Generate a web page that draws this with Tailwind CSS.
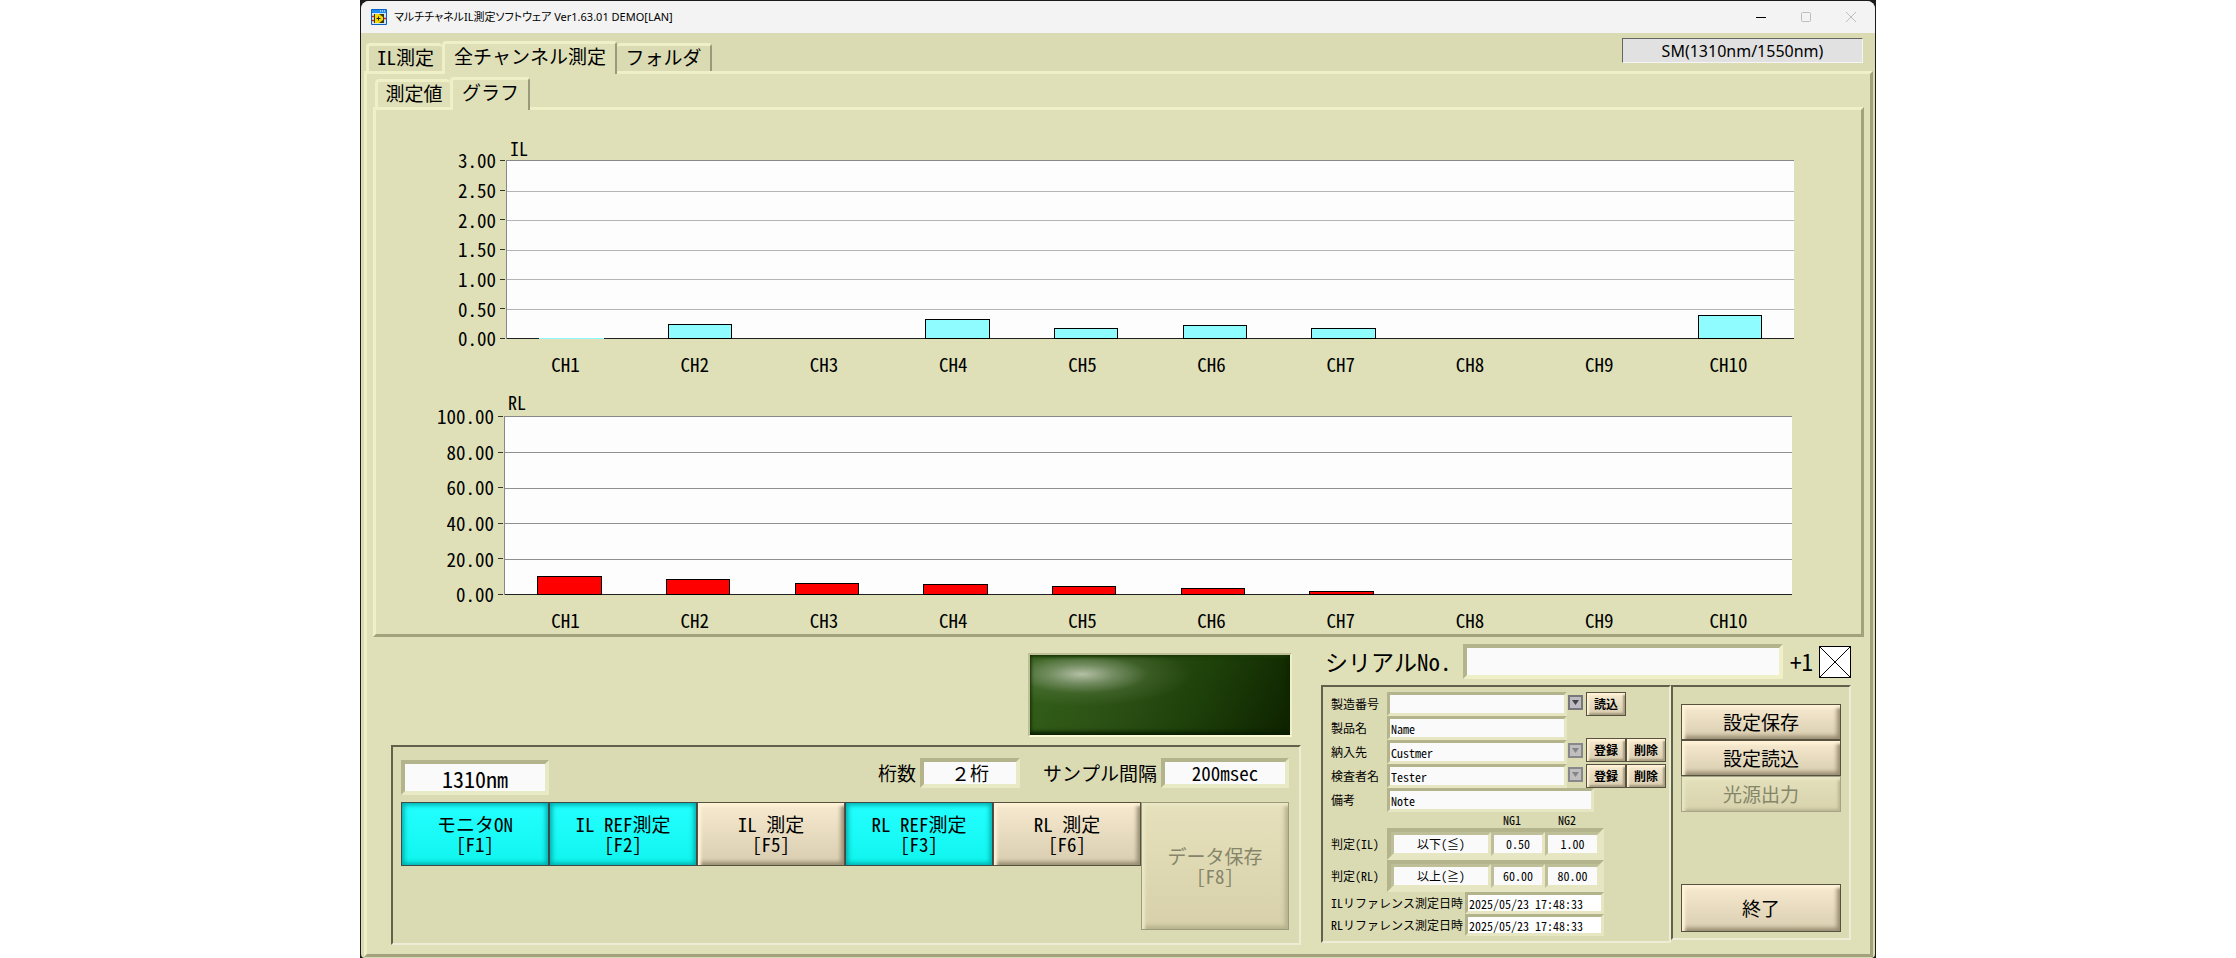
<!DOCTYPE html>
<html lang="ja">
<head>
    <meta charset="UTF-8">
    <meta name="viewport" content="width=device-width, initial-scale=1.0">
    <title>マルチチャネルIL測定ソフトウェア</title>
    <script src="https://cdn.jsdelivr.net/npm/@tailwindcss/browser@4"></script>
</head>
<body class="bg-white min-h-screen flex text-black font-['Noto_Sans_Mono_CJK_JP','Noto_Sans_CJK_JP',monospace]">
    <div class="w-full max-w-[1516px] mx-auto bg-[#1c1a1e] pt-px px-px flex">
        <div class="flex-1 min-w-0 flex flex-col rounded-t-lg rounded-b-sm overflow-hidden bg-[#dadab3]">

            <!-- Title bar -->
            <header class="h-8 bg-[#f3f3f3] flex items-center pl-[10px] font-['Noto_Sans','Noto_Sans_CJK_JP',sans-serif]">
                <svg class="w-4 h-4 mr-[7px]" viewBox="0 0 16 16">
                    <rect width="16" height="16" rx="1" fill="#0a5fc4"/>
                    <rect x="1" y="1" width="14" height="3" fill="#1f8df0"/>
                    <path d="M9 2h1M11 2h1M13 2h1" stroke="#fff"/>
                    <rect x="1" y="4" width="14" height="11" fill="#cfe6f7"/>
                    <path d="M1 7.500h3M1 11.500h3" stroke="#e02020" stroke-width="1.500"/>
                    <path d="M12 9.500h3" stroke="#e02020" stroke-width="1.500"/>
                    <rect x="3" y="5" width="10" height="9" fill="#3a3a10"/>
                    <path d="M4 5h4l4 3v3l-4 3H4z" fill="#f5d800"/>
                    <path d="M5.500 9.500h4M7.500 7.500v4" stroke="#222"/>
                </svg>
                <h1 class="text-[11px] whitespace-nowrap [font-feature-settings:'palt']">マルチチャネルIL測定ソフトウェア Ver1.63.01 DEMO[LAN]</h1>
                <div class="ml-auto flex h-full pr-px">
                    <button aria-label="最小化" class="w-[45px] flex items-center justify-center"><svg class="w-[10px] h-[10px]" viewBox="0 0 10 10"><path d="M0 5.500h10" stroke="#000"/></svg></button>
                    <button aria-label="最大化" class="w-[45px] flex items-center justify-center"><svg class="w-[10px] h-[10px]" viewBox="0 0 10 10"><rect x=".5" y=".5" width="9" height="9" rx="1" fill="none" stroke="#bdbdbd"/></svg></button>
                    <button aria-label="閉じる" class="w-[46px] flex items-center justify-center"><svg class="w-[10px] h-[10px]" viewBox="0 0 10 10"><path d="M0 0l10 10M10 0L0 10" stroke="#bdbdbd"/></svg></button>
                </div>
            </header>

            <div class="flex-1 flex flex-col pl-[3px] pr-[2px] pb-px">
                <!-- Main tabs -->
                <div class="flex justify-between items-end h-[38px]">
                    <nav class="flex items-end text-[19px] pl-[2px]">
                        <button class="w-[76px] h-7 pb-[2px] flex items-center justify-center rounded-t-sm border-t-3 border-l-3 border-[#f0f0c8]">IL測定</button>
                        <button class="relative z-10 w-[175px] h-[33px] -mb-[3px] pb-[6px] flex items-center justify-center rounded-t-sm border-t-3 border-l-3 border-r-2 border-[#f0f0c8] border-r-[#9a9a78] bg-[#dfe0b8]">全チャンネル測定</button>
                        <button class="w-[95px] h-7 pb-[2px] flex items-center justify-center rounded-t-sm border-t-3 border-r-2 border-[#f0f0c8] border-r-[#9a9a78]">フォルダ</button>
                    </nav>
                    <output class="w-[241px] h-[25px] mb-2 mr-[10px] flex items-center justify-center text-[16px] bg-[#e1e1e1] border border-t-[#666] border-l-[#666] border-b-[#f5f5f5] border-r-[#f5f5f5] font-['Noto_Sans',sans-serif]">SM(1310nm/1550nm)</output>
                </div>

                <main class="flex-1 flex flex-col bg-[#dfe0b8] border-3 border-[#f0f0c8] border-r-[#a2a37c] border-b-[#a2a37c] pt-[3px] px-[6px]">
                    <!-- Sub tabs -->
                    <nav class="flex items-end h-[30px] text-[19px] pl-[2px]">
                        <button class="w-[75px] h-7 pb-[2px] flex items-center justify-center rounded-t-sm border-t-3 border-l-3 border-[#f0f0c8]">測定値</button>
                        <button class="relative z-10 w-[80px] h-[33px] -mb-[3px] pb-[6px] flex items-center justify-center rounded-t-sm border-t-3 border-l-3 border-r-2 border-[#f0f0c8] border-r-[#9a9a78] bg-[#dfe0b8]">グラフ</button>
                    </nav>

                    <!-- Graphs -->
                    <section class="h-[530px] border-3 border-[#f0f0c8] border-r-[#a2a37c] border-b-[#a2a37c] pt-[26px] text-[19px]">
                        <h2 class="pl-[134px] h-6 leading-6 text-[18px] font-light">IL</h2>
                        <div class="flex pr-[67px]">
                            <div id="ilAxis" class="w-[130px] h-[179px] flex flex-col justify-between"></div>
                            <div class="relative flex-1 h-[179px] bg-[#fdfdfd] border-t border-l border-t-[#888] border-l-[#888]">
                                <div id="ilGrid" class="absolute inset-0 flex flex-col justify-between"></div>
                                <div id="ilBars" class="absolute inset-0 flex"></div>
                            </div>
                        </div>
                        <div id="ilNames" class="grid grid-cols-10 h-[50px] items-center text-center ml-[125px] mr-[68px]"></div>

                        <h2 class="pl-[132px] h-[27px] leading-[26px] text-[18px] font-light">RL</h2>
                        <div class="flex pr-[69px]">
                            <div id="rlAxis" class="w-[128px] h-[179px] flex flex-col justify-between"></div>
                            <div class="relative flex-1 h-[179px] bg-[#fdfdfd] border-t border-l border-t-[#888] border-l-[#888]">
                                <div id="rlGrid" class="absolute inset-0 flex flex-col justify-between"></div>
                                <div id="rlBars" class="absolute inset-0 flex"></div>
                            </div>
                        </div>
                        <div id="rlNames" class="grid grid-cols-10 h-[50px] items-center text-center ml-[125px] mr-[68px]"></div>
                    </section>

                    <div class="flex justify-between pt-[7px] pl-[18px] pr-[13px]">
                        <!-- Measurement controls -->
                        <section class="w-[910px]">
                            <div class="ml-auto mr-[9px] mt-[9px] w-[264px] h-[84px] border-2 border-t-[#bfc097] border-l-[#bfc097] border-b-[#fafad6] border-r-[#f0f0c8]">
                                <div role="img" aria-label="判定ランプ" class="w-full h-full bg-[radial-gradient(ellipse_110px_32px_at_20%_24%,#b4c0a6_0%,#93a584aa_30%,#5f7d4a55_60%,transparent_100%),linear-gradient(115deg,#336018_0%,#2c5115_35%,#1d3f09_65%,#0e2200_100%)] shadow-[inset_0_-3px_4px_#0a1c00,inset_-3px_0_5px_#12290088,inset_0_2px_3px_#1d4208]"></div>
                            </div>
                            <div class="mt-2 h-[200px] bg-[#dadab3] border-2 border-t-[#62624c] border-l-[#62624c] border-b-[#ecedd4] border-r-[#ecedd4] pl-2 pr-[10px]">
                                <div class="flex items-start h-[55px] pt-[11px] text-[19px] leading-[30px]">
                                    <select aria-label="波長" class="appearance-none w-[148px] h-[35px] text-[22px] leading-[26px] text-center bg-[#fafafa] border-4 border-t-[#b3b48c] border-l-[#b3b48c] border-b-[#e8e9c5] border-r-[#e8e9c5] mt-[2px]"><option>1310nm</option></select>
                                    <label for="digits" class="ml-auto mr-1">桁数</label>
                                    <select id="digits" class="appearance-none w-[100px] h-[30px] leading-[22px] text-center bg-[#fafafa] border-4 border-t-[#b3b48c] border-l-[#b3b48c] border-b-[#e8e9c5] border-r-[#e8e9c5] mr-[23px]"><option>２桁</option></select>
                                    <label for="interval" class="mr-1">サンプル間隔</label>
                                    <select id="interval" class="appearance-none w-[128px] h-[30px] leading-[22px] text-center bg-[#fafafa] border-4 border-t-[#b3b48c] border-l-[#b3b48c] border-b-[#e8e9c5] border-r-[#e8e9c5]"><option>200msec</option></select>
                                </div>
                                <div class="grid grid-cols-6 items-start text-[19px] leading-5">
                                    <button class="h-16 border border-[#3f4b48] bg-linear-to-b from-[#22ffff] to-[#0ff5ee] shadow-[inset_0_0_5px_2px_#00a9a9]">モニタON<br>[F1]</button>
                                    <button class="h-16 border border-[#3f4b48] bg-linear-to-b from-[#22ffff] to-[#0ff5ee] shadow-[inset_0_0_5px_2px_#00a9a9]">IL REF測定<br>[F2]</button>
                                    <button class="h-16 border border-[#56523f] bg-linear-to-b from-[#f7ead0] to-[#d9cdb0] shadow-[inset_3px_3px_3px_#fff3d8,inset_-3px_-3px_4px_#968b70]">IL 測定<br>[F5]</button>
                                    <button class="h-16 border border-[#3f4b48] bg-linear-to-b from-[#22ffff] to-[#0ff5ee] shadow-[inset_0_0_5px_2px_#00a9a9]">RL REF測定<br>[F3]</button>
                                    <button class="h-16 border border-[#56523f] bg-linear-to-b from-[#f7ead0] to-[#d9cdb0] shadow-[inset_3px_3px_3px_#fff3d8,inset_-3px_-3px_4px_#968b70]">RL 測定<br>[F6]</button>
                                    <button disabled class="h-32 border border-[#9c9b7e] bg-linear-to-b from-[#e6e1bc] to-[#d7d0aa] text-[#85856a] shadow-[inset_3px_3px_3px_#ebe8c5,inset_-3px_-3px_4px_#b5b18c]">データ保存<br>[F8]</button>
                                </div>
                            </div>
                        </section>

                        <!-- Serial number, conditions and settings -->
                        <section class="w-[530px]">
                            <div class="flex items-center h-[35px] pl-1">
                                <label for="serial" class="w-[138px] text-[23px] leading-[35px] whitespace-nowrap">シリアルNo.</label>
                                <input id="serial" type="text" class="w-[320px] h-[35px] px-2 text-[22px] bg-[#fafafa] border-4 border-t-[#b3b48c] border-l-[#b3b48c] border-b-[#efefc8] border-r-[#efefc8]">
                                <label for="increment" class="ml-auto text-[23px]">+1</label>
                                <span class="relative ml-[6px] w-8 h-8">
                                    <input id="increment" type="checkbox" checked class="appearance-none block w-8 h-8 bg-white border border-black">
                                    <svg class="absolute inset-0 w-8 h-8 pointer-events-none" viewBox="0 0 32 32"><path d="M1 1l30 30M31 1L1 31" stroke="#000"/></svg>
                                </span>
                            </div>

                            <div class="flex items-start mt-[6px]">
                                <div class="w-[350px] h-[258px] bg-[#dadab3] border-2 border-t-[#62624c] border-l-[#62624c] border-b-[#ecedd4] border-r-[#ecedd4] pl-2 pt-[5px] text-[12px]">
                                    <div class="flex items-center h-6">
                                        <label for="lot" class="w-14">製造番号</label>
                                        <input id="lot" type="text" class="w-[180px] h-6 px-px bg-[#fafafa] border-3 border-t-[#b3b48c] border-l-[#b3b48c] border-b-[#e6e7c2] border-r-[#e6e7c2]">
                                        <button aria-label="製造番号を選択" class="ml-px mb-1 w-[15px] h-[15px] border-2 border-[#77777c] bg-[#bcbcc2] flex items-center justify-center"><svg class="w-[7px] h-[7px]" viewBox="0 0 7 7"><path d="M0 1h7L3.500 6z" fill="#444"/></svg></button>
                                        <button class="ml-[3px] w-10 h-6 font-bold border border-[#56523f] bg-linear-to-b from-[#f7ead0] to-[#d9cdb0] shadow-[inset_2px_2px_2px_#fff3d8,inset_-2px_-2px_2px_#a69b80]">読込</button>
                                    </div>
                                    <div class="flex items-center h-6">
                                        <label for="product" class="w-14">製品名</label>
                                        <input id="product" type="text" value="Name" class="w-[180px] h-6 px-px bg-[#fafafa] border-3 border-t-[#b3b48c] border-l-[#b3b48c] border-b-[#e6e7c2] border-r-[#e6e7c2]">
                                    </div>
                                    <div class="flex items-center h-6">
                                        <label for="customer" class="w-14">納入先</label>
                                        <input id="customer" type="text" value="Custmer" class="w-[180px] h-6 px-px bg-[#fafafa] border-3 border-t-[#b3b48c] border-l-[#b3b48c] border-b-[#e6e7c2] border-r-[#e6e7c2]">
                                        <button aria-label="納入先を選択" class="ml-px mb-1 w-[15px] h-[15px] border-2 border-[#88888a] bg-[#bfbfc0] flex items-center justify-center"><svg class="w-[7px] h-[7px]" viewBox="0 0 7 7"><path d="M0 1h7L3.500 6z" fill="#858585"/></svg></button>
                                        <button class="ml-[3px] mb-1 w-10 h-6 font-bold border border-[#56523f] bg-linear-to-b from-[#f7ead0] to-[#d9cdb0] shadow-[inset_2px_2px_2px_#fff3d8,inset_-2px_-2px_2px_#a69b80]">登録</button>
                                        <button class="mb-1 w-10 h-6 font-bold border border-[#56523f] bg-linear-to-b from-[#f7ead0] to-[#d9cdb0] shadow-[inset_2px_2px_2px_#fff3d8,inset_-2px_-2px_2px_#a69b80]">削除</button>
                                    </div>
                                    <div class="flex items-center h-6">
                                        <label for="inspector" class="w-14">検査者名</label>
                                        <input id="inspector" type="text" value="Tester" class="w-[180px] h-6 px-px bg-[#fafafa] border-3 border-t-[#b3b48c] border-l-[#b3b48c] border-b-[#e6e7c2] border-r-[#e6e7c2]">
                                        <button aria-label="検査者名を選択" class="ml-px mb-1 w-[15px] h-[15px] border-2 border-[#88888a] bg-[#bfbfc0] flex items-center justify-center"><svg class="w-[7px] h-[7px]" viewBox="0 0 7 7"><path d="M0 1h7L3.500 6z" fill="#858585"/></svg></button>
                                        <button class="ml-[3px] w-10 h-6 font-bold border border-[#56523f] bg-linear-to-b from-[#f7ead0] to-[#d9cdb0] shadow-[inset_2px_2px_2px_#fff3d8,inset_-2px_-2px_2px_#a69b80]">登録</button>
                                        <button class="w-10 h-6 font-bold border border-[#56523f] bg-linear-to-b from-[#f7ead0] to-[#d9cdb0] shadow-[inset_2px_2px_2px_#fff3d8,inset_-2px_-2px_2px_#a69b80]">削除</button>
                                    </div>
                                    <div class="flex items-center h-6">
                                        <label for="note" class="w-14">備考</label>
                                        <input id="note" type="text" value="Note" class="w-[207px] h-6 px-px bg-[#fafafa] border-3 border-t-[#b3b48c] border-l-[#b3b48c] border-b-[#e6e7c2] border-r-[#e6e7c2]">
                                    </div>
                                    <div class="flex h-4 leading-4 text-[12px] text-center pl-[154px]">
                                        <span class="w-[54px]">NG1</span>
                                        <span class="w-[56px]">NG2</span>
                                    </div>
                                    <div class="flex items-center h-8">
                                        <label for="ilJudge" class="w-14">判定(IL)</label>
                                        <div class="flex w-[217px] h-8 border-4 border-t-[#b3b48c] border-l-[#b3b48c] border-b-[#e6e7c2] border-r-[#e6e7c2]">
                                            <select id="ilJudge" class="appearance-none w-[100px] text-center bg-[#fafafa] border-3 border-t-[#bebf98] border-l-[#bebf98] border-b-[#e6e7c2] border-r-[#e6e7c2]"><option>以下(≦)</option></select>
                                            <input aria-label="IL NG1" type="text" value="0.50" class="w-[54px] text-center bg-[#fafafa] border-3 border-t-[#bebf98] border-l-[#bebf98] border-b-[#e6e7c2] border-r-[#e6e7c2]">
                                            <input aria-label="IL NG2" type="text" value="1.00" class="w-[55px] text-center bg-[#fafafa] border-3 border-t-[#bebf98] border-l-[#bebf98] border-b-[#e6e7c2] border-r-[#e6e7c2]">
                                        </div>
                                    </div>
                                    <div class="flex items-center h-8">
                                        <label for="rlJudge" class="w-14">判定(RL)</label>
                                        <div class="flex w-[217px] h-8 border-4 border-t-[#b3b48c] border-l-[#b3b48c] border-b-[#e6e7c2] border-r-[#e6e7c2]">
                                            <select id="rlJudge" class="appearance-none w-[100px] text-center bg-[#fafafa] border-3 border-t-[#bebf98] border-l-[#bebf98] border-b-[#e6e7c2] border-r-[#e6e7c2]"><option>以上(≧)</option></select>
                                            <input aria-label="RL NG1" type="text" value="60.00" class="w-[54px] text-center bg-[#fafafa] border-3 border-t-[#bebf98] border-l-[#bebf98] border-b-[#e6e7c2] border-r-[#e6e7c2]">
                                            <input aria-label="RL NG2" type="text" value="80.00" class="w-[55px] text-center bg-[#fafafa] border-3 border-t-[#bebf98] border-l-[#bebf98] border-b-[#e6e7c2] border-r-[#e6e7c2]">
                                        </div>
                                    </div>
                                    <div class="flex items-center h-[22px]">
                                        <label for="ilDate" class="w-[134px] whitespace-nowrap">ILリファレンス測定日時</label>
                                        <input id="ilDate" type="text" readonly value="2025/05/23 17:48:33" class="w-[139px] h-[22px] px-px bg-white border-3 border-t-[#b3b48c] border-l-[#b3b48c] border-b-[#e6e7c2] border-r-[#e6e7c2]">
                                    </div>
                                    <div class="flex items-center h-[22px]">
                                        <label for="rlDate" class="w-[134px] whitespace-nowrap">RLリファレンス測定日時</label>
                                        <input id="rlDate" type="text" readonly value="2025/05/23 17:48:33" class="w-[139px] h-[22px] px-px bg-white border-3 border-t-[#b3b48c] border-l-[#b3b48c] border-b-[#e6e7c2] border-r-[#e6e7c2]">
                                    </div>
                                </div>

                                <div class="w-[180px] h-[255px] bg-[#dadab3] border-2 border-t-[#62624c] border-l-[#62624c] border-b-[#ecedd4] border-r-[#ecedd4] px-2 pt-[17px] pb-[6px] flex flex-col text-[19px]">
                                    <button class="h-9 border border-[#56523f] bg-linear-to-b from-[#f7ead0] to-[#d9cdb0] shadow-[inset_3px_3px_3px_#fff3d8,inset_-3px_-3px_4px_#968b70]">設定保存</button>
                                    <button class="h-9 border border-[#56523f] bg-linear-to-b from-[#f7ead0] to-[#d9cdb0] shadow-[inset_3px_3px_3px_#fff3d8,inset_-3px_-3px_4px_#968b70]">設定読込</button>
                                    <button disabled class="h-9 border border-[#a5a486] bg-linear-to-b from-[#e3e0bb] to-[#d8d3ad] text-[#85856a] shadow-[inset_3px_3px_3px_#e8e6c3,inset_-2px_-2px_3px_#bab794]">光源出力</button>
                                    <button class="mt-auto h-12 border border-[#56523f] bg-linear-to-b from-[#f7ead0] to-[#d9cdb0] shadow-[inset_3px_3px_3px_#fff3d8,inset_-3px_-3px_4px_#968b70]">終了</button>
                                </div>
                            </div>
                        </section>
                    </div>
                </main>
            </div>
        </div>
    </div>

    <script>
        const charts = [
            { id: 'il', max: 3, step: 0.5, bar: 'bg-[#8ffcff]', grid: 'bg-[#b4b4b4]', values: [0, 0.25, null, 0.34, 0.18, 0.23, 0.18, null, null, 0.4] },
            { id: 'rl', max: 100, step: 20, bar: 'bg-[#ff0000]', grid: 'bg-[#909090]', values: [10.8, 9.2, 6.9, 6.2, 5.1, 4, 2.4, null, null, null] }
        ];

        function drawChart(chart) {
            const ticks = [];
            for (let v = chart.max; v >= 0; v -= chart.step) ticks.push(v);

            document.getElementById(chart.id + 'Axis').innerHTML = ticks.map(v => `
                <div class="h-px flex items-center justify-end whitespace-nowrap">
                    ${v.toFixed(2)}<span class="w-[5px] h-px bg-[#333] ml-1 mr-px"></span>
                </div>
            `).join('');

            document.getElementById(chart.id + 'Grid').innerHTML = ticks.map((v, i) => {
                const color = i === 0 ? 'bg-transparent' : v === 0 ? 'bg-[#222]' : chart.grid;
                return `<div class="h-px ${color}"></div>`;
            }).join('');

            document.getElementById(chart.id + 'Bars').innerHTML = chart.values.map(v => {
                if (v === null) return '<div class="flex-1"></div>';
                const outline = v === 0 ? 'min-h-px' : 'border border-black';
                return `
                    <div class="flex-1 flex items-end justify-center">
                        <div class="w-1/2 ${outline} ${chart.bar}" style="height:${v / chart.max * 100}%"></div>
                    </div>
                `;
            }).join('');

            document.getElementById(chart.id + 'Names').innerHTML =
                chart.values.map((v, i) => `<span>CH${i + 1}</span>`).join('');
        }

        charts.forEach(drawChart);
    </script>
</body>
</html>
